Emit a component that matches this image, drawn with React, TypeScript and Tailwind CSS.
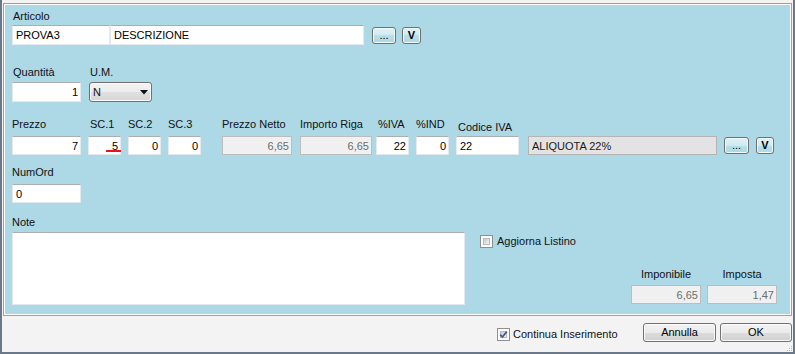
import React from "react";
import clsx from "clsx";

type Kind = "normal" | "disabled" | "readonly";

function TextBox({
  value,
  className,
  right,
  kind = "normal",
}: {
  value: string;
  className: string;
  right?: boolean;
  kind?: Kind;
}) {
  const skin =
    kind === "disabled"
      ? "border-[#bdbdbd] bg-[#f0f0f0] text-[#6d6d6d]"
      : kind === "readonly"
        ? "border-[#b4b4b4] bg-[#e3e3e3] text-[#1b1b1b]"
        : "border-[#e3e9ef] border-t-[#abadb3] bg-white text-black";
  return (
    <input
      readOnly
      value={value}
      className={clsx(
        "block border text-[11px] outline-none",
        right ? "pr-[2px] pl-[3px] text-right" : "pl-[3px] pr-[2px]",
        skin,
        className,
      )}
    />
  );
}

function SmallButton({
  children,
  className,
  bold,
}: {
  children: React.ReactNode;
  className: string;
  bold?: boolean;
}) {
  return (
    <button
      type="button"
      className={clsx(
        "flex items-center justify-center rounded-[3px] border border-[#707070] bg-[linear-gradient(#e2f2f7,#cdeaf2_50%,#b9dfea_50%,#acd8e5)] text-[11px] leading-none text-black shadow-[inset_0_0_0_1px_#f4fbfd]",
        bold && "font-bold",
        className,
      )}
    >
      {children}
    </button>
  );
}

function CheckBox({ checked }: { checked?: boolean }) {
  return (
    <span className="relative block h-[13px] w-[13px] shrink-0 border border-[#8e8f8f] bg-white p-[2px]">
      <span className="block h-full w-full border border-[#b5b8bd] bg-[linear-gradient(135deg,#c9cdd2,#f4f4f5)]" />
      {checked && (
        <svg
          className="absolute left-0 top-0"
          width="11"
          height="11"
          viewBox="0 0 11 11"
        >
          <path
            d="M2.2 5.6 L4.4 8 L8.8 2.6"
            fill="none"
            stroke="#3d5a94"
            strokeWidth="1.7"
          />
        </svg>
      )}
    </span>
  );
}

function WinButton({ children, className }: { children: React.ReactNode; className: string }) {
  return (
    <button
      type="button"
      className={clsx(
        "rounded-[3px] border border-[#707070] bg-[linear-gradient(#f2f2f2,#ebebeb_50%,#dddddd_50%,#cfcfcf)] text-[11px] leading-none text-black shadow-[inset_0_0_0_1px_#fbfbfb]",
        className,
      )}
    >
      {children}
    </button>
  );
}

function Label({ children, className = "" }: { children: React.ReactNode; className?: string }) {
  return <div className={clsx("h-[13px] whitespace-nowrap leading-[13px]", className)}>{children}</div>;
}

export default function App() {
  return (
    <div className="relative h-[354px] w-[795px] border-x-2 border-b-2 border-[#6b7888] bg-[#f4f3f4] px-px pt-[3px] font-['Liberation_Sans',Arial,sans-serif] text-[11px] text-[#111]">
      <div className="h-[313px] border border-[#a0a0a0]">
        <div className="h-full border border-white bg-[#add8e6] pl-[7px] pt-[5px]">
          {/* Articolo */}
          <Label className="pl-px">Articolo</Label>
          <div className="mt-[2px] flex items-start">
            <TextBox value="PROVA3" className="h-[20px] w-[98px]" />
            <TextBox value="DESCRIZIONE" className="h-[20px] w-[254px]" />
            <SmallButton className="ml-[8px] mt-[2px] h-[17px] w-[24px]">...</SmallButton>
            <SmallButton className="ml-[6px] mt-[2px] h-[17px] w-[19px]" bold>
              V
            </SmallButton>
          </div>

          {/* Quantità / U.M. */}
          <div className="mt-[21px] flex items-end">
            <div className="flex flex-col">
              <Label className="pl-px">Quantità</Label>
              <TextBox value="1" right className="mt-[3px] h-[20px] w-[69px]" />
            </div>
            <div className="ml-[8px] flex flex-col">
              <Label className="pl-px">U.M.</Label>
              <div className="mt-[3px] flex h-[20px] w-[63px] items-center justify-between rounded-[3px] border border-[#707070] bg-[linear-gradient(#f3f3f3,#ececec_50%,#e0e0e0_50%,#d6d6d6)] pl-[3px] pr-[3px] shadow-[inset_0_0_0_1px_#fafafa]">
                <span>N</span>
                <svg width="8" height="5" viewBox="0 0 8 5">
                  <path d="M0 0 H8 L4 4.5 Z" fill="#111" />
                </svg>
              </div>
            </div>
          </div>

          {/* Prezzo row */}
          <div className="mt-[16px] flex items-end">
            <div className="flex flex-col">
              <Label className="mb-[5px]">Prezzo</Label>
              <TextBox value="7" right className="h-[19px] w-[69px]" />
            </div>
            <div className="ml-[7px] flex flex-col">
              <Label className="mb-[5px] pl-[2px]">SC.1</Label>
              <div className="relative">
                <TextBox value="5" right className="h-[19px] w-[33px]" />
                <span className="absolute bottom-[3px] right-0 h-[2px] w-[15px] bg-[#e8141c]" />
              </div>
            </div>
            <div className="ml-[7px] flex flex-col">
              <Label className="mb-[5px]">SC.2</Label>
              <TextBox value="0" right className="h-[19px] w-[33px]" />
            </div>
            <div className="ml-[7px] flex flex-col">
              <Label className="mb-[5px]">SC.3</Label>
              <TextBox value="0" right className="h-[19px] w-[33px]" />
            </div>
            <div className="ml-[21px] flex flex-col">
              <Label className="mb-[5px]">Prezzo Netto</Label>
              <TextBox value="6,65" right kind="disabled" className="h-[19px] w-[70px]" />
            </div>
            <div className="ml-[8px] flex flex-col">
              <Label className="mb-[5px]">Importo Riga</Label>
              <TextBox value="6,65" right kind="disabled" className="h-[19px] w-[72px]" />
            </div>
            <div className="ml-[4px] flex flex-col">
              <Label className="mb-[5px] pl-[2px]">%IVA</Label>
              <TextBox value="22" right className="h-[19px] w-[33px]" />
            </div>
            <div className="ml-[7px] flex flex-col">
              <Label className="mb-[5px]">%IND</Label>
              <TextBox value="0" right className="h-[19px] w-[33px]" />
            </div>
            <div className="ml-[7px] flex flex-col">
              <Label className="mb-[2px] mt-[3px] pl-[2px]">Codice IVA</Label>
              <TextBox value="22" className="h-[19px] w-[63px]" />
            </div>
            <TextBox value="ALIQUOTA 22%" kind="readonly" className="ml-[9px] h-[19px] w-[189px]" />
            <SmallButton className="mb-[1px] ml-[7px] h-[17px] w-[25px]">...</SmallButton>
            <SmallButton className="mb-[1px] ml-[7px] h-[17px] w-[18px]" bold>
              V
            </SmallButton>
          </div>

          {/* NumOrd */}
          <div className="mt-[11px] flex flex-col">
            <Label>NumOrd</Label>
            <TextBox value="0" className="mt-[5px] h-[19px] w-[69px]" />
          </div>

          {/* Note + totals */}
          <div className="mt-[13px] flex">
            <div className="flex flex-col">
              <Label>Note</Label>
              <textarea
                readOnly
                className="mt-[3px] block h-[73px] w-[453px] resize-none border border-[#e3e9ef] border-t-[#abadb3] bg-white outline-none"
              />
            </div>
            <div className="ml-[15px] flex flex-1 flex-col pr-[13px]">
              <div className="mt-[19px] flex items-center">
                <CheckBox />
                <span className="ml-[4px] leading-[13px]">Aggiorna Listino</span>
              </div>
              <div className="mt-[20px] flex justify-end gap-[6px]">
                <div className="flex w-[70px] flex-col items-center">
                  <Label>Imponibile</Label>
                  <TextBox value="6,65" right kind="disabled" className="mt-[4px] h-[19px] w-[70px]" />
                </div>
                <div className="flex w-[70px] flex-col items-center">
                  <Label>Imposta</Label>
                  <TextBox value="1,47" right kind="disabled" className="mt-[4px] h-[19px] w-[70px]" />
                </div>
              </div>
            </div>
          </div>
        </div>
      </div>

      {/* footer */}
      <div className="flex h-[36px] items-start pt-[7px]">
        <div className="ml-[494px] mt-[5px] flex items-center">
          <CheckBox checked />
          <span className="ml-[3px] leading-[13px]">Continua Inserimento</span>
        </div>
        <div className="ml-auto flex gap-[4px]">
          <WinButton className="h-[19px] w-[73px]">Annulla</WinButton>
          <WinButton className="h-[19px] w-[72px]">OK</WinButton>
        </div>
      </div>

      <svg className="absolute bottom-0 right-0" width="8" height="8" viewBox="0 0 8 8">
        <rect x="6" y="2" width="1" height="1" fill="#b9b9b9" />
        <rect x="4" y="4" width="1" height="1" fill="#b9b9b9" />
        <rect x="6" y="4" width="1" height="1" fill="#b9b9b9" />
        <rect x="2" y="6" width="1" height="1" fill="#b9b9b9" />
        <rect x="4" y="6" width="1" height="1" fill="#b9b9b9" />
        <rect x="6" y="6" width="1" height="1" fill="#b9b9b9" />
      </svg>
    </div>
  );
}
